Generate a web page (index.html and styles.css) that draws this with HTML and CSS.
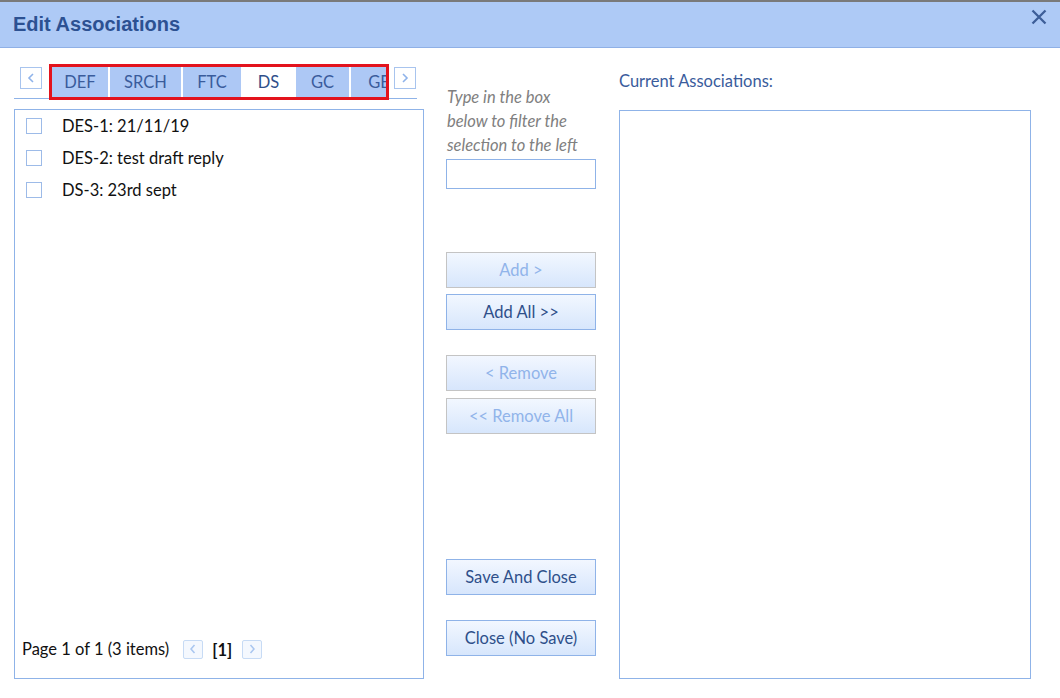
FILE: index.html
```html
<!DOCTYPE html>
<html>
<head>
<meta charset="utf-8">
<link rel="stylesheet" href="styles.css">
</head>
<body>
<div class="topstrip"></div>
<div class="dialog">
  <div class="header">
    <div class="title">Edit Associations</div>
    <svg class="close" viewBox="0 0 16 16" width="16" height="16"><path d="M1.5 1.5 L14.5 14.5 M14.5 1.5 L1.5 14.5" stroke="#3d5e98" stroke-width="2.3" fill="none"/></svg>
  </div>
  <div class="content">
    <div class="leftcol">
      <div class="tabbar">
        <div class="arrow"><svg viewBox="0 0 20 20" width="20" height="20"><path d="M12 6 L8 10 L12 14" stroke="#8fb3ea" stroke-width="1.6" fill="none"/></svg></div>
        <div class="strip">
          <div class="tab">DEF</div>
          <div class="tab w71">SRCH</div>
          <div class="tab w58">FTC</div>
          <div class="tab active">DS</div>
          <div class="tab w53">GC</div>
          <div class="tab">GE</div>
        </div>
        <div class="arrow"><svg viewBox="0 0 20 20" width="20" height="20"><path d="M8 6 L12 10 L8 14" stroke="#8fb3ea" stroke-width="1.6" fill="none"/></svg></div>
      </div>
      <div class="listbox">
        <div class="items">
          <label class="item"><span class="cb"></span><span>DES-1: 21/11/19</span></label>
          <label class="item"><span class="cb"></span><span>DES-2: test draft reply</span></label>
          <label class="item"><span class="cb"></span><span>DS-3: 23rd sept</span></label>
        </div>
        <div class="pager">
          <span>Page 1 of 1 (3 items)</span>
          <span class="pbtn prev"><svg viewBox="0 0 18 18" width="18" height="18"><path d="M10.5 5 L7 9 L10.5 13" stroke="#a9c6f0" stroke-width="1.5" fill="none"/></svg></span>
          <span class="pnum">[1]</span>
          <span class="pbtn"><svg viewBox="0 0 18 18" width="18" height="18"><path d="M7.5 5 L11 9 L7.5 13" stroke="#a9c6f0" stroke-width="1.5" fill="none"/></svg></span>
        </div>
      </div>
    </div>
    <div class="midcol">
      <div class="hint">Type in the box below to filter the selection to the left</div>
      <input class="filter" type="text">
      <div class="btn disabled first">Add &gt;</div>
      <div class="btn gap6">Add All &gt;&gt;</div>
      <div class="btn disabled gap25">&lt; Remove</div>
      <div class="btn disabled gap7">&lt;&lt; Remove All</div>
      <div class="spacer"></div>
      <div class="btn">Save And Close</div>
      <div class="btn gap25">Close (No Save)</div>
    </div>
    <div class="rightcol">
      <div class="label">Current Associations:</div>
      <div class="assocbox"></div>
    </div>
  </div>
</div>
</body>
</html>
```

FILE: styles.css
```css
html, body {
  margin: 0;
  padding: 0;
  background: #ffffff;
}
body {
  width: 1060px;
  height: 698px;
  overflow: hidden;
  font-family: Lato, "Liberation Sans", Arial, sans-serif;
}
.topstrip {
  height: 2px;
  background: #7a7a7a;
}
.dialog {
  display: flex;
  flex-direction: column;
}
.header {
  height: 45px;
  background: #aecaf6;
  border-bottom: 1px solid #8fb0e6;
  display: flex;
  align-items: center;
  justify-content: space-between;
  padding: 0 13px 0 13px;
}
.title {
  font-family: "Liberation Sans", Arial, sans-serif;
  font-weight: bold;
  font-size: 20px;
  color: #2c5192;
  margin-top: -1px;
}
.close {
  margin-top: -16px;
}
.content {
  display: flex;
  height: 631px;
}
.leftcol {
  width: 410px;
  margin-left: 14px;
  display: flex;
  flex-direction: column;
}
.tabbar {
  margin-top: 16px;
  height: 34px;
  border-bottom: 1px solid #8fb3e8;
  display: flex;
  align-items: flex-start;
  width: 403px;
}
.arrow {
  width: 20px;
  height: 20px;
  border: 1px solid #a8c4ee;
  margin-top: 3px;
  display: flex;
}
.arrow:first-child {
  margin-left: 6px;
  margin-right: 7px;
}
.arrow:last-child {
  margin-left: 5px;
}
.strip {
  width: 334px;
  height: 30px;
  border: 3px solid #e3131d;
  display: flex;
  gap: 2px;
  overflow: hidden;
  background: #ffffff;
}
.tab {
  flex: none;
  width: 56px;
  height: 30px;
  background: #adc8f5;
  color: #3a5c9c;
  font-size: 16.5px;
  display: flex;
  align-items: center;
  justify-content: center;
  padding-bottom: 1px;
  box-sizing: border-box;
}
.tab.w71 { width: 71px; }
.tab.w58 { width: 58px; }
.tab.w53 { width: 53px; }
.tab.active {
  width: 51px;
  background: #ffffff;
  color: #2f4f8a;
}
.listbox {
  margin-top: 10px;
  height: 568px;
  border: 1px solid #8fb3e8;
  display: flex;
  flex-direction: column;
}
.items {
  display: flex;
  flex-direction: column;
}
.item {
  height: 32px;
  display: flex;
  align-items: center;
  font-size: 16.5px;
  color: #111111;
  padding-bottom: 1px;
  box-sizing: border-box;
}
.cb {
  width: 14px;
  height: 14px;
  border: 1px solid #9dbbe8;
  margin-left: 11px;
  margin-right: 20px;
  margin-top: 1px;
  background: #ffffff;
}
.pager {
  margin-top: auto;
  height: 32px;
  margin-bottom: 13px;
  padding-left: 7px;
  display: flex;
  align-items: center;
  font-size: 16.5px;
  color: #111111;
}
.pbtn {
  width: 18px;
  height: 17px;
  border: 1px solid #c7dbf5;
  border-radius: 2px;
  margin-left: 10px;
  display: flex;
  align-items: center;
  justify-content: center;
  background: #f4f8fe;
}
.pbtn.prev { margin-left: 14px; }
.pbtn svg { display: block; }
.pnum {
  font-weight: bold;
  margin-left: 9px;
  padding-top: 2px;
}
.midcol {
  width: 150px;
  margin-left: 22px;
  display: flex;
  flex-direction: column;
}
.hint {
  margin-top: 37px;
  width: 145px;
  font-style: italic;
  color: #808080;
  font-size: 16.5px;
  line-height: 24px;
  padding-left: 1px;
}
.filter {
  box-sizing: border-box;
  width: 150px;
  height: 30px;
  margin: 2px 0 0 0;
  border: 1px solid #8fb3e8;
  outline: none;
  padding: 0;
}
.btn {
  box-sizing: border-box;
  height: 36px;
  border: 1px solid #8fb3e8;
  background: linear-gradient(#f2f7ff, #d7e6fc);
  color: #2e4f8a;
  font-size: 16.5px;
  display: flex;
  align-items: center;
  justify-content: center;
  padding-bottom: 1px;
}
.btn.disabled {
  border-color: #c4c4c4;
  color: #91b4ea;
}
.btn.first { margin-top: 63px; }
.btn.gap6 { margin-top: 6px; }
.btn.gap7 { margin-top: 7px; }
.btn.gap25 { margin-top: 25px; }
.spacer { flex: 1; }
.midcol .btn:last-child { margin-bottom: 23px; }
.rightcol {
  width: 412px;
  margin-left: 23px;
  display: flex;
  flex-direction: column;
}
.label {
  margin-top: 23px;
  font-size: 16.5px;
  color: #3a5c9c;
  height: 20px;
  line-height: 20px;
}
.assocbox {
  margin-top: 19px;
  height: 567px;
  border: 1px solid #8fb3e8;
}
```
